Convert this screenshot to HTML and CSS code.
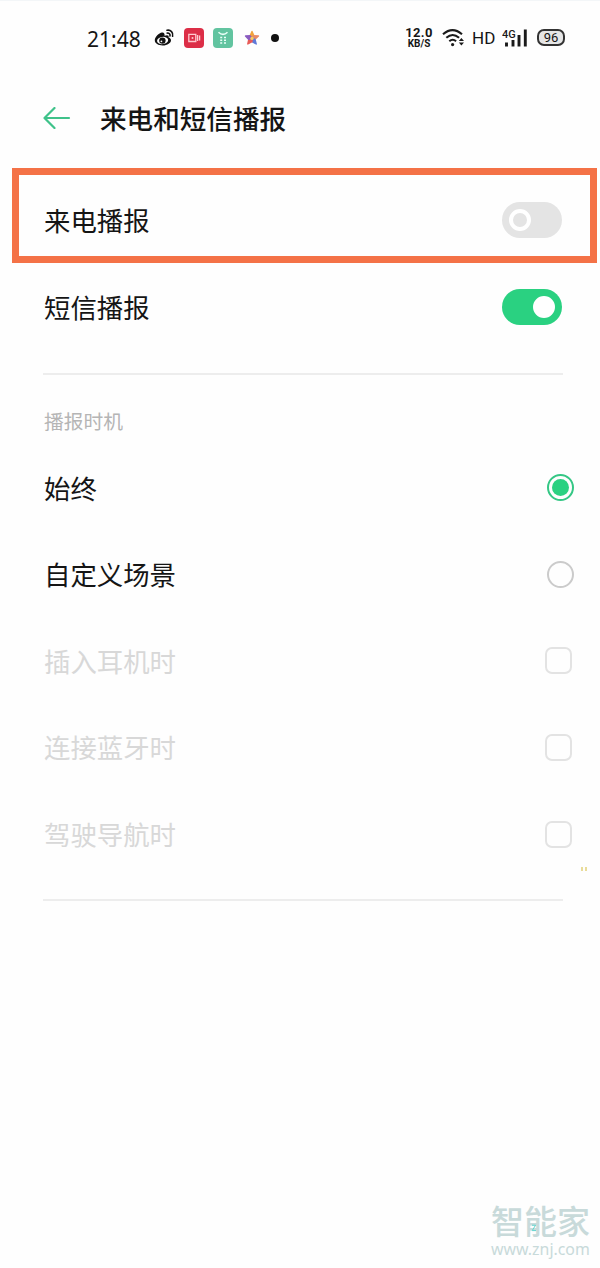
FILE: index.html
```
<!DOCTYPE html>
<html lang="zh-CN">
<head>
  <meta charset="UTF-8" />
  <meta name="viewport" content="width=device-width, initial-scale=1.0"/>
  <title>来电和短信播报</title>
  <link rel="stylesheet" href="styles.css">
</head>
<body>
  <div class="status-bar">
    <div class="status-left">
      <span class="time">21:48</span>
      <svg class="weibo" width="21" height="19" viewBox="0 0 21 19">
        <path d="M8 4.5C5 5 .8 9 .8 12.3c0 3.2 3.7 5.2 7.8 5.2 5 0 8.4-2.8 8.4-5.3 0-1.6-1.2-2.3-2.4-2.7.6-1.9-.8-2.9-4.1-1.7.4-2-.5-3.6-2.5-3.3z" fill="#111"/>
        <ellipse cx="8.6" cy="12.5" rx="5.6" ry="3.6" fill="#fff" transform="rotate(-8 8.6 12.5)"/>
        <circle cx="8.4" cy="12.6" r="3.2" fill="#111"/>
        <circle cx="7.4" cy="13.3" r=".9" fill="#fff"/>
        <path d="M13 2.3c3.6-.8 6.6 2.2 5.6 6M13.2 5.1c1.9-.3 3.2 1 2.8 2.8" fill="none" stroke="#111" stroke-width="1.6" stroke-linecap="round"/>
      </svg>
      <svg class="camera" width="20" height="20" viewBox="0 0 20 20">
        <rect width="20" height="20" rx="4" fill="#dc2e47"/>
        <path d="M4.8 6.3h7v7.2h-7zM13.6 7v6M15.6 7.5v5" fill="none" stroke="#ffc9cf" stroke-width="1.3"/>
        <circle cx="8.5" cy="9.9" r="1" fill="#ffc9cf"/>
      </svg>
      <svg class="green-app" width="20" height="20" viewBox="0 0 20 20">
        <rect width="20" height="20" rx="4" fill="#62c4a0"/>
        <path d="M5.5 4.2q4.5 4.4 9 0M7.2 9.5h2M11 9.5h2M7.2 12.2h2M11 12.2h2M7.2 14.9h2M11 14.9h2" fill="none" stroke="#e9fff7" stroke-width="1.5"/>
      </svg>
      <svg class="star" width="16" height="16" viewBox="0 0 16 16">
        <g stroke-width="1.4" stroke-linejoin="round">
          <path d="M8 1.5l1.8 4L8 8.2 6.2 5.5z" fill="#f2a33c" stroke="#f2a33c"/>
          <path d="M9.8 5.7l4.7.3-3.6 3.3L8 8.2z" fill="#e88b66" stroke="#e88b66"/>
          <path d="M11 9.3l1.2 4.7L8 11.7V8.2z" fill="#5f7ad8" stroke="#5f7ad8"/>
          <path d="M8 11.7L3.8 14l1-4.6L8 8.2z" fill="#e85b58" stroke="#e85b58"/>
          <path d="M4.8 9.4L1.5 6l4.5-.3L8 8.2z" fill="#8a5cc0" stroke="#8a5cc0"/>
        </g>
        <circle cx="8" cy="8.4" r="1.7" fill="#f6cc62"/>
      </svg>
      <span class="dot"></span>
    </div>
    <div class="status-right">
      <div class="speed"><b>12.0</b><span>KB/S</span></div>
      <svg class="wifi" width="24" height="19" viewBox="0 0 24 19">
        <path d="M1 6.2q9.5-8.2 19 0M4.3 9.8q6.4-5.6 12.8 0M7.3 13.2q3.4-2.9 6.8 0" fill="none" stroke="#1a1a1a" stroke-width="2.1"/>
        <circle cx="10.6" cy="16.6" r="1.6" fill="#1a1a1a"/>
        <path d="M16.8 13l2.6-3 2.6 3zM16.8 14.6l2.6 3 2.6-3z" fill="#1a1a1a"/>
      </svg>
      <span class="hd">HD</span>
      <svg class="signal" width="26" height="20" viewBox="0 0 26 20">
        <text x="0" y="9.5" class="signal-label">4G</text>
        <path d="M4.5 14.5v4M11 12v6.5M17 7v11.5M23.3 1.5v17" stroke="#1a1a1a" stroke-width="2.9"/>
      </svg>
      <div class="battery">96</div>
    </div>
  </div>

  <div class="header">
    <svg class="back" width="28" height="22" viewBox="0 0 28 22">
      <path d="M26 11H1.5M11.5 1L1.5 11l10 10" fill="none" stroke="#3fc28a" stroke-width="2.2" stroke-linecap="round" stroke-linejoin="round"/>
    </svg>
    <h1>来电和短信播报</h1>
  </div>

  <div class="highlight">
    <div class="row">
      <span>来电播报</span>
      <span class="switch"></span>
    </div>
  </div>
  <div class="row">
    <span>短信播报</span>
    <span class="switch on"></span>
  </div>

  <hr>

  <h2>播报时机</h2>
  <div class="options">
    <div class="row">
      <span>始终</span>
      <span class="radio checked"></span>
    </div>
    <div class="row">
      <span>自定义场景</span>
      <span class="radio"></span>
    </div>
    <div class="row disabled">
      <span>插入耳机时</span>
      <span class="checkbox"></span>
    </div>
    <div class="row disabled">
      <span>连接蓝牙时</span>
      <span class="checkbox"></span>
    </div>
    <div class="row disabled">
      <span>驾驶导航时</span>
      <span class="checkbox"></span>
    </div>
    <span class="mark"></span>
  </div>

  <hr>

  <div class="watermark">
    <strong>智能家</strong>
    <span>www.znj.com</span>
    <svg class="spark" width="6" height="8" viewBox="0 0 6 8">
      <path d="M1 1.2h3.6L1.2 6.6H5" fill="none" stroke="#5fd6d0" stroke-width="1"/>
    </svg>
  </div>
</body>
</html>
```
FILE: styles.css
```
*, *::before {
  box-sizing: border-box;
}
body {
  margin: 0;
  width: 600px;
  height: 1268px;
  position: relative;
  overflow: hidden;
  background: #fefefe;
  color: #151515;
  font-family: "Noto Sans", "Noto Sans CJK SC", sans-serif;
}

/* status bar */
.status-bar {
  display: flex;
  justify-content: space-between;
  height: 76px;
  padding: 0 35px 2px 87px;
  border-top: 1px solid #f3f6f8;
}
.status-left, .status-right {
  display: flex;
  align-items: center;
}
.time {
  width: 67px;
  font-size: 21px;
  padding-top: 2px;
}
.camera {
  margin-left: 9px;
}
.green-app {
  margin-left: 9px;
}
.star {
  margin-left: 11px;
}
.dot {
  width: 8px;
  height: 8px;
  margin-left: 11px;
  border-radius: 50%;
  background: #111;
}
.speed {
  width: 28px;
  text-align: center;
  font-family: Roboto, sans-serif;
  line-height: 11px;
}
.speed b {
  display: block;
  font-size: 13px;
  letter-spacing: 0.4px;
}
.speed span {
  display: block;
  font-size: 10px;
  font-weight: 700;
}
.wifi {
  margin-left: 9px;
}
.hd {
  width: 22px;
  margin-left: 6px;
  font: 17px Roboto, sans-serif;
}
.signal {
  margin-left: 8px;
}
.signal-label {
  font: 500 11px Roboto, sans-serif;
  fill: #1a1a1a;
}
.battery {
  width: 28px;
  height: 17px;
  margin-left: 9px;
  border: 2px solid #333;
  border-radius: 7px;
  background: #e6e6e6;
  text-align: center;
  font: 400 13px/14px Roboto, sans-serif;
}

/* title */
.header {
  display: flex;
  align-items: center;
  height: 84px;
  padding-left: 43px;
}
h1 {
  margin: 0 0 2px 29px;
  font-size: 26.6px;
  font-weight: 500;
}

/* rows */
.row {
  display: flex;
  align-items: center;
  justify-content: space-between;
  height: 86.6px;
  padding: 0 38px 0 44px;
  font-size: 26.4px;
}
.row > span:first-child {
  margin-bottom: 1px;
}
.highlight {
  width: 585px;
  height: 95px;
  margin: 8px 0 0 12px;
  border: 7px solid #f47247;
}
.highlight .row {
  height: 90px;
  padding: 0 28px 0 25px;
}
.highlight + .row {
  height: 88px;
}
.switch {
  display: flex;
  align-items: center;
  width: 60px;
  height: 36px;
  padding: 0 7px;
  border-radius: 18px;
  background: #e4e4e4;
}
.switch::before {
  content: "";
  width: 22px;
  height: 22px;
  border: 4.5px solid #fff;
  border-radius: 50%;
}
.switch.on {
  justify-content: flex-end;
  background: #2ad181;
}
.switch.on::before {
  background: #fff;
}
hr {
  height: 2px;
  margin: 22px 37px 0 43px;
  border: 0;
  background: #ededed;
}
h2 {
  margin: 32px 0 0 44px;
  color: #b5b5b5;
  font-size: 19.8px;
  line-height: 30px;
  font-weight: 400;
}
.options {
  position: relative;
  margin-top: 7.4px;
}
.options .row {
  padding-right: 26px;
}
.options .disabled {
  padding-right: 28px;
  color: #d8d8d8;
}
.radio {
  width: 27px;
  height: 27px;
  border: 2px solid #cbcbcb;
  border-radius: 50%;
}
.radio.checked {
  padding: 3px;
  border-color: #35c785;
  background: #2ad181 content-box;
}
.checkbox {
  width: 27px;
  height: 27px;
  border: 2px solid #e3e3e3;
  border-radius: 7px;
}
.mark {
  position: absolute;
  right: 13px;
  bottom: 6px;
  width: 6px;
  height: 4px;
  border: solid #e9dc9a;
  border-width: 0 2px;
}

.watermark {
  position: absolute;
  right: 9px;
  bottom: 9px;
  width: 100px;
  color: #c8dada;
}
.watermark strong {
  display: block;
  height: 34px;
  font: 500 33px/30px "Noto Sans CJK SC", sans-serif;
}
.watermark span {
  display: block;
  font-size: 15.9px;
  line-height: 20px;
}
.spark {
  position: absolute;
  left: 40px;
  top: 19px;
}
```
